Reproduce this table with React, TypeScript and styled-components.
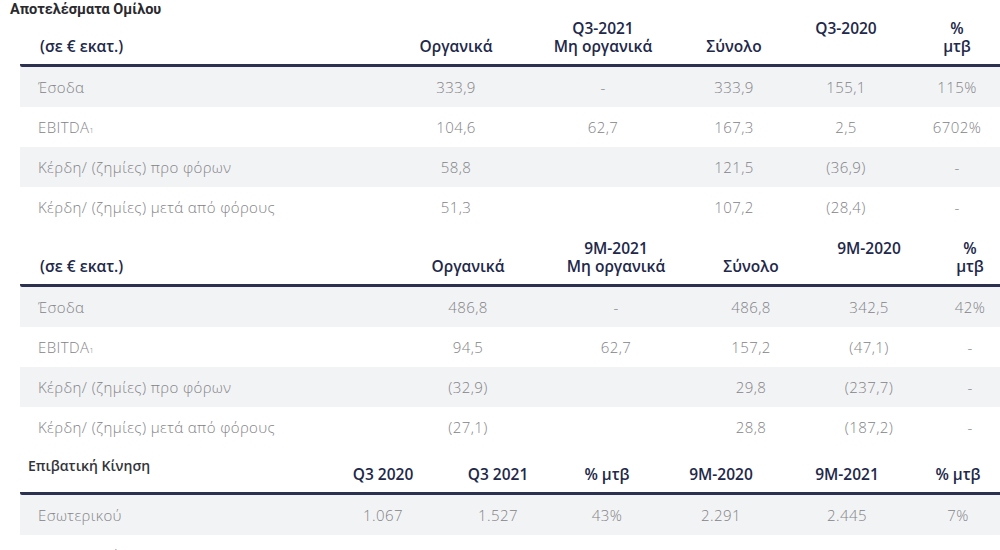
import styled, { createGlobalStyle } from 'styled-components'

const GlobalStyle = createGlobalStyle`
  html, body {
    margin: 0;
    padding: 0;
    background: #ffffff;
    overflow: hidden;
  }
  body {
    font-family: "Open Sans", "Noto Sans", sans-serif;
  }
`

const Pagina = styled.div`
  width: 1000px;
  height: 550px;
  overflow: hidden;
`

const TituloGrupo = styled.h1`
  margin: 0;
  padding-left: 10px;
  height: 19px;
  font-family: Roboto, "Liberation Sans", sans-serif;
  font-size: 14.5px;
  line-height: 19px;
  font-weight: 700;
  color: #2a2a2e;
`

const Tabela = styled.div`
  margin-left: 20px;
  width: 980px;
`

const Cabecalho = styled.div<{ $colunas: string; $acima: number }>`
  display: grid;
  grid-template-columns: ${({ $colunas }) => $colunas};
  align-items: end;
  padding: ${({ $acima }) => $acima}px 0 9px;
  border-bottom: 3px solid #2d3150;
  border-radius: 2px 0 0 2px;
`

const CelulaCabecalho = styled.div<{ $topo?: boolean }>`
  align-self: ${({ $topo }) => ($topo ? 'start' : 'end')};
  text-align: center;
  font-size: 15.5px;
  line-height: 18px;
  font-weight: 600;
  color: #222849;
  white-space: nowrap;
`

const RotuloCabecalho = styled(CelulaCabecalho)`
  text-align: left;
  padding-left: 20px;
`

const TituloSecao = styled.div`
  align-self: start;
  padding: 0 0 8px 8px;
  font-size: 14px;
  line-height: 18px;
  font-weight: 600;
  color: #34353a;
  white-space: nowrap;
`

const Linha = styled.div<{ $colunas: string; $cinza: boolean }>`
  display: grid;
  grid-template-columns: ${({ $colunas }) => $colunas};
  align-items: center;
  height: 40px;
  background: ${({ $cinza }) => ($cinza ? '#f2f3f5' : '#ffffff')};
`

const Celula = styled.div`
  text-align: center;
  font-size: 15px;
  letter-spacing: 0.4px;
  font-weight: 300;
  color: #838387;
  white-space: nowrap;
`

const Rotulo = styled(Celula)`
  text-align: left;
  padding-left: 18px;
`

const Indice = styled.span`
  font-size: 8px;
`

type Cabeca = { texto: string[]; topo?: boolean }

type Props = {
  colunas: string
  acima: number
  rotulo?: string
  secao?: string
  cabecas: Cabeca[]
  linhas: { rotulo: React.ReactNode; valores: string[] }[]
}

const TabelaResultados = ({ colunas, acima, rotulo, secao, cabecas, linhas }: Props) => (
  <Tabela>
    <Cabecalho $colunas={colunas} $acima={acima}>
      {secao ? <TituloSecao>{secao}</TituloSecao> : <RotuloCabecalho>{rotulo}</RotuloCabecalho>}
      {cabecas.map((c, i) => (
        <CelulaCabecalho key={i} $topo={c.topo}>
          {c.texto.map((t, j) => (
            <div key={j}>{t}</div>
          ))}
        </CelulaCabecalho>
      ))}
    </Cabecalho>
    {linhas.map((l, i) => (
      <Linha key={i} $colunas={colunas} $cinza={i % 2 === 0}>
        <Rotulo>{l.rotulo}</Rotulo>
        {l.valores.map((v, j) => (
          <Celula key={j}>{v}</Celula>
        ))}
      </Linha>
    ))}
  </Tabela>
)

const ebitda = (
  <>
    EBITDA<Indice>1</Indice>
  </>
)

const App = () => {
  return (
    <Pagina>
      <GlobalStyle />
      <TituloGrupo>Αποτελέσματα Ομίλου</TituloGrupo>
      <TabelaResultados
        colunas="376px 120px 174px 88px 136px 86px"
        acima={0}
        rotulo="(σε € εκατ.)"
        cabecas={[
          { texto: ['Οργανικά'] },
          { texto: ['Q3-2021', 'Μη οργανικά'] },
          { texto: ['Σύνολο'] },
          { texto: ['Q3-2020'], topo: true },
          { texto: ['%', 'μτβ'] },
        ]}
        linhas={[
          { rotulo: 'Έσοδα', valores: ['333,9', '-', '333,9', '155,1', '115%'] },
          { rotulo: ebitda, valores: ['104,6', '62,7', '167,3', '2,5', '6702%'] },
          { rotulo: 'Κέρδη/ (ζημίες) προ φόρων', valores: ['58,8', '', '121,5', '(36,9)', '-'] },
          { rotulo: 'Κέρδη/ (ζημίες) μετά από φόρους', valores: ['51,3', '', '107,2', '(28,4)', '-'] },
        ]}
      />
      <TabelaResultados
        colunas="388px 120px 176px 94px 142px 60px"
        acima={12}
        rotulo="(σε € εκατ.)"
        cabecas={[
          { texto: ['Οργανικά'] },
          { texto: ['9M-2021', 'Μη οργανικά'] },
          { texto: ['Σύνολο'] },
          { texto: ['9M-2020'], topo: true },
          { texto: ['%', 'μτβ'] },
        ]}
        linhas={[
          { rotulo: 'Έσοδα', valores: ['486,8', '-', '486,8', '342,5', '42%'] },
          { rotulo: ebitda, valores: ['94,5', '62,7', '157,2', '(47,1)', '-'] },
          { rotulo: 'Κέρδη/ (ζημίες) προ φόρων', valores: ['(32,9)', '', '29,8', '(237,7)', '-'] },
          { rotulo: 'Κέρδη/ (ζημίες) μετά από φόρους', valores: ['(27,1)', '', '28,8', '(187,2)', '-'] },
        ]}
      />
      <TabelaResultados
        colunas="300px 126px 104px 114px 114px 138px 84px"
        acima={10}
        secao="Επιβατική Κίνηση"
        cabecas={[
          { texto: ['Q3 2020'] },
          { texto: ['Q3 2021'] },
          { texto: ['% μτβ'] },
          { texto: ['9M-2020'] },
          { texto: ['9M-2021'] },
          { texto: ['% μτβ'] },
        ]}
        linhas={[
          { rotulo: 'Εσωτερικού', valores: ['1.067', '1.527', '43%', '2.291', '2.445', '7%'] },
          { rotulo: 'Εξωτερικού', valores: ['851', '1.751', '106%', '2.489', '3.529', '42%'] },
        ]}
      />
    </Pagina>
  )
}

export default App
